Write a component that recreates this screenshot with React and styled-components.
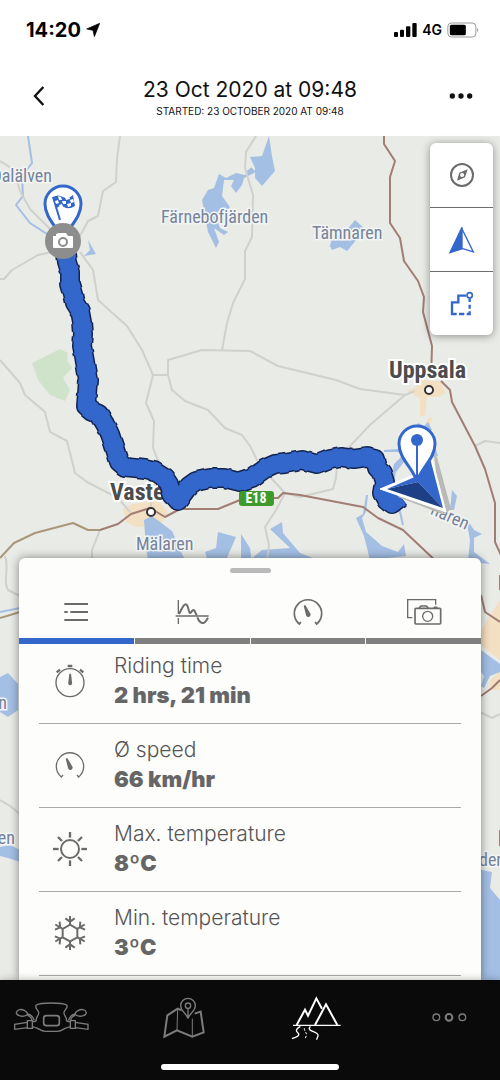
import React, {useState} from 'react';
import styled, {createGlobalStyle} from 'styled-components';

const GlobalStyle = createGlobalStyle`
    * {
        box-sizing: border-box;
    }
    body {
        margin: 0;
        font-family: Inter, "Liberation Sans", sans-serif;
        background: #fff;
    }
    button {
        border: 0;
        padding: 0;
        background: none;
        font: inherit;
        cursor: pointer;
    }
    svg {
        display: block;
    }
`;

const Page = styled.div`
    display: flex;
    flex-direction: column;
    height: 100vh;
    min-height: 640px;
    overflow: hidden;
`;

/* ---------- status bar + header ---------- */

const StatusBar = styled.div`
    display: flex;
    align-items: center;
    justify-content: space-between;
    height: 60px;
    flex-shrink: 0;
    padding: 0 20px 0 26px;
    color: #000;
`;

const StatusGroup = styled.div`
    display: flex;
    align-items: center;
    gap: 5px;
`;

const Clock = styled.span`
    font-size: 20px;
    font-weight: 700;
    line-height: 24px;
`;

const Network = styled.span`
    font-size: 14px;
    font-weight: 600;
    line-height: 20px;
`;

const Header = styled.header`
    display: flex;
    align-items: center;
    justify-content: space-between;
    height: 76px;
    flex-shrink: 0;
    padding: 0 19px 4px;
`;

const HeaderButton = styled.button`
    display: flex;
    align-items: center;
    justify-content: center;
    width: 40px;
    height: 40px;
`;

const Titles = styled.div`
    padding-top: 4px;
    text-align: center;
    color: #111;
`;

const Title = styled.h1`
    margin: 0;
    font-size: 21px;
    font-weight: 400;
    line-height: 26px;
`;

const Subtitle = styled.p`
    margin: 0;
    font-size: 10px;
    line-height: 16px;
    text-transform: uppercase;
`;

/* ---------- map ---------- */

const Stage = styled.main`
    display: grid;
    grid-template-columns: minmax(0, 1fr);
    grid-template-rows: minmax(0, 1fr) minmax(0, 1fr);
    flex: 1;
    min-height: 0;
    background: #e9ebe6;
`;

const MapCanvas = styled.svg`
    grid-row: 1 / 3;
    grid-column: 1;
    width: 100%;
    height: 100%;
    font-family: "Liberation Sans Narrow", "Roboto Condensed", "Open Sans", sans-serif;
`;

const MapTools = styled.div`
    grid-row: 1;
    grid-column: 1;
    justify-self: end;
    align-self: start;
    display: flex;
    flex-direction: column;
    width: 63px;
    margin: 7px;
    border-radius: 6px;
    background: #fff;
    box-shadow: 0 1px 8px rgba(0, 0, 0, 0.4);
`;

const ToolButton = styled.button`
    display: flex;
    align-items: center;
    justify-content: center;
    height: 64px;

    & + & {
        border-top: 1px solid #6d6d6d;
    }
`;

/* ---------- sheet ---------- */

const Sheet = styled.section`
    grid-row: 2;
    grid-column: 1;
    display: flex;
    flex-direction: column;
    min-height: 0;
    margin: 0 19px;
    border-radius: 6px 6px 0 0;
    background: #fdfdfc;
    box-shadow: 0 0 10px rgba(0, 0, 0, 0.45);
`;

const HandleArea = styled.div`
    height: 28px;
    flex-shrink: 0;
    padding-top: 10px;
`;

const Handle = styled.div`
    width: 41px;
    height: 5px;
    margin: 0 auto;
    border-radius: 3px;
    background: #bababa;
`;

const Tabs = styled.div`
    display: flex;
    gap: 1px;
    flex-shrink: 0;
`;

const Tab = styled.button`
    display: flex;
    align-items: center;
    justify-content: center;
    flex: 1;
    height: 58px;
    border-bottom: 6px solid ${({$active}) => ($active ? '#3367cb' : '#808080')};
`;

const List = styled.dl`
    flex: 1;
    min-height: 0;
    margin: 0;
    padding: 0 20px;
    overflow-y: auto;
    scrollbar-width: none;
`;

const Row = styled.div`
    display: flex;
    align-items: center;
    gap: 24px;
    padding: 12px 11px 13px;
    border-bottom: 1px solid #a9a9a9;

    &:first-child {
        padding-top: 8px;
    }
`;

const RowLabel = styled.dt`
    font-size: 21px;
    font-weight: 300;
    line-height: 28px;
    color: #555;
`;

const RowValue = styled.dd`
    margin: 0;
    font-size: 22px;
    font-weight: 900;
    line-height: 30px;
    color: #666;
`;

/* ---------- bottom navigation ---------- */

const BottomNav = styled.nav`
    position: relative;
    display: flex;
    flex-direction: column;
    align-items: center;
    justify-content: space-between;
    height: 100px;
    flex-shrink: 0;
    padding: 12px 13px 10px;
    background: #0a0a0a;
    box-shadow: 0 0 8px rgba(0, 0, 0, 0.3);
`;

const NavItems = styled.div`
    display: flex;
    justify-content: space-between;
    width: 100%;
`;

const NavButton = styled.button`
    display: flex;
    align-items: center;
    justify-content: center;
    width: 76px;
    height: 52px;
    color: ${({$active}) => ($active ? '#fff' : '#7c7c7c')};
`;

const HomeIndicator = styled.div`
    width: 178px;
    height: 6px;
    border-radius: 3px;
    background: #fff;
`;

/* ---------- icons ---------- */

const Icon = ({box, w = 40, h = 40, color = '#6b6b6b', stroke = 5, children}) => (
    <svg viewBox={box} width={w} height={h} fill="none" stroke={color} strokeWidth={stroke} aria-hidden="true">
        {children}
    </svg>
);

const LocationIcon = () => (
    <Icon box="0 0 40 40" w={14} h={14} color="none">
        <path d="M39 1 L24 39 L20 21 L2 17 Z" fill="#000" stroke="#000" strokeWidth="2" strokeLinejoin="round" />
    </Icon>
);

const SignalIcon = () => (
    <Icon box="0 0 69 42" w={23} h={14} color="none">
        <g fill="#000">
            <rect x="0" y="27" width="12" height="15" rx="3" />
            <rect x="18" y="20" width="12" height="22" rx="3" />
            <rect x="36" y="10" width="13" height="32" rx="3" />
            <rect x="55" y="0" width="13" height="42" rx="3" />
        </g>
    </Icon>
);

const BatteryIcon = () => (
    <Icon box="0 0 98 48" w={33} h={16} color="#9a9a9a" stroke={3}>
        <rect x="2" y="3" width="84" height="42" rx="11" />
        <rect x="8" y="8" width="48" height="32" rx="5" fill="#000" stroke="none" />
        <path d="M90 17 q7 7 0 14 Z" fill="#9a9a9a" stroke="none" />
    </Icon>
);

const BackIcon = () => (
    <Icon box="0 0 36 60" w={12} h={20} color="#111" stroke={7}>
        <path d="M31 3 L6 30 L31 57" />
    </Icon>
);

const DotsIcon = () => (
    <Icon box="0 0 72 18" w={24} h={6} color="none">
        <g fill="#111">
            <circle cx="10" cy="9" r="8" />
            <circle cx="36" cy="9" r="8" />
            <circle cx="62" cy="9" r="8" />
        </g>
    </Icon>
);

const CompassIcon = () => (
    <Icon box="575 55 120 120" stroke={6}>
        <circle cx="635" cy="115" r="33" />
        <path
            d="M652 98 L644 122 L620 132 L627 108 Z M635 109 a6 6 0 1 0 1 12 a6 6 0 1 0 -1 -12 Z"
            fill="#6b6b6b"
            fillRule="evenodd"
            stroke="none"
        />
    </Icon>
);

const NorthIcon = () => (
    <Icon box="575 248 120 120" color="#3367cb" stroke={4}>
        <path d="M635 275 L601 344 L635 333 L669 344 Z" />
        <path d="M635 270 L599 346 L635 334 Z" fill="#3367cb" />
    </Icon>
);

const AreaIcon = () => (
    <Icon box="573 440 120 120" color="#3367cb" stroke={7}>
        <path d="M645 475 H622 V495 H603 V530 H617" />
        <path d="M624 530 H640 M647 530 H656 V522 M656 514 V502 M656 494 V483" />
        <circle cx="656" cy="474" r="8" strokeWidth="5" />
    </Icon>
);

const ListIcon = () => (
    <Icon box="171 126 120 120" stroke={6}>
        <path d="M196 162 H267 M196 186 H206 M214 186 H267 M196 210 H267" />
    </Icon>
);

const ChartIcon = () => (
    <Icon box="517 126 120 120" stroke={4}>
        <path d="M528 198 H627 M536 150 V192 M536 204 V222" />
        <path
            d="M538 192 C547 176 551 163 558 163 C567 163 566 189 571 189 C576 189 577 178 582 180 C588 183 586 191 592 196 M593 202 C597 212 602 219 610 219 C617 219 621 210 625 203"
            strokeWidth="6"
        />
    </Icon>
);

const GaugeIcon = ({stroke}) => (
    <Icon box="864 126 120 120" stroke={stroke}>
        <path d="M903 216 L898 222 A41 41 0 1 1 950 222 L945 216" />
        <path d="M911 167 L916 165 L930 189 A7 7 0 1 1 918 195 Z" fill="#6b6b6b" stroke="none" />
    </Icon>
);

const PhotosIcon = () => (
    <Icon box="1211 126 120 120" stroke={4}>
        <path d="M1236 203 H1222 V149 H1306 V164" />
        <rect x="1244" y="175" width="77" height="47" rx="3" strokeWidth="5" />
        <path d="M1256 174 L1262 168 H1278 L1284 174 M1300 172 H1311" strokeWidth="5" />
        <circle cx="1282" cy="199" r="15" />
    </Icon>
);

const StopwatchIcon = () => (
    <Icon box="150 66 120 120" stroke={4}>
        <circle cx="210" cy="131" r="42" />
        <path d="M203 81 H217 M170 100 L180 92 M250 100 L240 92" strokeWidth="7" />
        <path d="M208 104 H213 L216 130 A6 6 0 1 1 205 130 Z" fill="#6b6b6b" stroke="none" />
    </Icon>
);

const SunIcon = () => (
    <Icon box="150 93 120 120" stroke={6}>
        <circle cx="210" cy="153" r="27" />
        {[0, 45, 90, 135, 180, 225, 270, 315].map(angle => (
            <path key={angle} d="M210 102 V119" strokeWidth="7" transform={`rotate(${angle} 210 153)`} />
        ))}
    </Icon>
);

const SnowIcon = () => (
    <Icon box="150 345 120 120" stroke={6}>
        <path d="M210 380 L232 393 V418 L210 430 L188 418 V393 Z" />
        {[0, 60, 120, 180, 240, 300].map(angle => (
            <path key={angle} d="M210 354 V380 M196 361 L210 371 L224 361" transform={`rotate(${angle} 210 405)`} />
        ))}
    </Icon>
);

const HandlebarHalf = () => (
    <>
        <path d="M49 113 C51 103 64 101 74 107 C80 110 84 115 82 118 C78 124 66 125 58 122 C53 120 49 117 49 113 Z" />
        <path d="M82 117 C94 119 97 124 103 136 M82 121 C90 123 94 127 96 136" />
        <path d="M82 142 L44 148 V163 L82 158 M82 137 V160 H97 V137 Z M97 140 H104 L109 137 M97 156 H103" />
    </>
);

const BikeIcon = () => (
    <Icon box="39 69 228 120" w={76} color="currentColor" stroke={4}>
        <path d="M109 138 C105 128 118 122 116 112 C114 104 102 97 109 90 C122 82 186 82 200 90 C206 97 194 104 192 112 C190 122 203 128 199 138" />
        <path d="M103 157 C115 157 120 169 136 169 H172 C188 169 193 157 205 157" />
        <rect x="131" y="122" width="47" height="30" rx="8" strokeWidth="5" />
        <HandlebarHalf />
        <g transform="translate(308 0) scale(-1 1)">
            <HandlebarHalf />
        </g>
    </Icon>
);

const MapIcon = () => (
    <Icon box="486 60 132 132" w={44} h={44} color="currentColor" stroke={6}>
        <path d="M545 103 L533 98 L502 118 L493 182 L531 163 L577 182 L611 169 L602 107 L584 113" />
        <path d="M533 98 L531 163 M577 128 V182" strokeWidth="3" />
        <path d="M564 128 C559 110 542 106 542 89 a22 22 0 0 1 44 0 C586 106 569 110 564 128 V98" strokeWidth="4" />
        <circle cx="564" cy="89" r="8" strokeWidth="4" />
    </Icon>
);

const MountainIcon = () => (
    <Icon box="126 54 150 150" w={50} h={50} color="currentColor" stroke={6}>
        <path d="M143 150 L168 104 L177 122 L202 70 L219 101" />
        <path d="M198 150 L231 88 L265 150" />
        <path d="M132 151 H275" strokeWidth="4" />
        <path d="M154 154 C138 164 140 168 149 176 C152 186 140 186 129 191" strokeWidth="4" />
        <path d="M166 160 C166 170 174 172 172 182 L168 192" strokeWidth="3" strokeDasharray="7 5" />
        <path d="M184 154 C170 170 206 168 207 180 C208 187 203 189 203 194" strokeWidth="4" />
    </Icon>
);

const MoreIcon = () => (
    <Icon box="540 67 114 120" w={38} color="currentColor" stroke={4}>
        <circle cx="559" cy="125" r="10" />
        <circle cx="597" cy="125" r="10" strokeWidth="6" />
        <circle cx="637" cy="125" r="10" />
    </Icon>
);

/* ---------- map drawing ---------- */

const minorRoads = [
    'M0 161 L13 169 L20 191 L30 209 L50 229',
    'M120 136 L117 159 L116 182 L103 191 L98 216 L88 221 L80 236',
    'M52 252 L38 255 L12 270 L4 279 L0 279',
    'M80 252 L93 270 L98 300 L127 326 L142 350 L153 375 L168 375',
    'M153 375 L146 403 L154 421 L153 448 L159 463 L150 510',
    'M256 136 L246 152 L245 168 L253 195 L252 237 L245 251 L245 279 L233 303 L227 323 L222 350',
    'M168 375 L168 360 L202 350 L250 351 L278 366 L336 380 L360 389 L405 395 L415 391',
    'M168 375 L172 390 L185 401 L208 410 L225 428 L242 435 L250 446 L257 460 L270 477 L285 493',
    'M405 395 L392 406 L370 425 L350 446 L335 458',
    'M337 463 L336 478 L333 489 L300 497 L285 493 L276 510 L265 527 L269 545 L266 570',
    'M475 446 L485 441 L500 443',
    'M0 360 L20 383 L25 395 L45 412 L50 432 L67 441 L75 473 L87 482 L118 498 L130 512',
    'M100 530 L92 550 L92 562',
    'M5 556 C10 570 2 580 8 590 L24 598',
    'M0 800 L10 806 L20 814',
    'M480 712 L492 718 L500 714',
];

const majorRoads = [
    'M384 136 L384 144 L395 161 L390 177 L390 223 L400 238 L404 261 L418 281 L424 297 L423 312 L432 346 L431 380',
    'M441 381 L450 390 L452 402 L475 446 L485 469 L495 503 L495 542 L501 555',
    'M273 498 L278 498 L283 493 L300 495 L363 507 L378 518 L403 530 L440 565',
    'M240 500 L218 509 L180 509 L165 517 L150 508 L131 514 L118 524 L100 530',
    'M481 595 L485 612 L500 622',
    'M481 696 L492 688 L500 680',
    'M500 575 V590 M500 830 V846',
];

const lakes = [
    'M219 174 L226 178 L236 173 L245 175 L252 168 L256 172 L244 178 L242 185 L236 193 L231 186 L234 180 L224 180 L222 196 L230 207 L224 214 L216 216 L220 228 L228 232 L224 235 L214 228 L219 242 L216 248 L208 232 L204 210 L202 200 L208 190 L214 188 Z',
    'M250 157 L262 156 L269 136 L272 156 L275 171 L262 186 L255 178 L255 168 Z',
    'M330 246 L332 238 L345 232 L355 220 L365 229 L357 239 L347 251 L340 247 L332 250 Z',
    'M144 520 L152 516 L172 531 L183 556 L196 572 L150 572 L146 548 Z',
    'M218 532 L236 537 L226 560 L208 562 L205 552 L216 548 Z M241 534 L250 548 L252 564 L241 562 Z',
    'M270 529 L282 522 L283 533 L300 553 L318 560 L250 560 L262 550 L290 548 Z',
    'M356 518 L363 514 L366 495 L368 495 L366 512 L362 518 L366 532 L382 546 L398 552 L404 544 L406 556 L370 560 L364 536 Z',
    'M384 450 L398 449 L410 454 L436 450 L438 456 L404 462 L396 472 L394 482 L391 478 L394 464 L402 456 L398 452 L384 452 Z',
    'M452 490 L457 496 L454 510 L450 510 Z M466 518 L474 530 L482 534 L474 538 L474 552 L490 564 L468 562 L470 540 Z',
    'M0 677 L8 673 L18 684 V710 L8 717 L0 712 Z',
    'M0 847 L10 845 L20 850 V862 L8 858 L0 856 Z',
    'M481 650 L500 664 V672 L490 676 L484 688 L481 686 L484 676 L481 672 Z',
    'M481 870 L492 872 L490 888 L500 900 V980 H478 V884 Z',
    'M418 423 L424 426 L428 422 L432 430 L414 432 Z',
    'M88 240 L92 247 L96 254 L84 256 L90 250 Z',
];

const route =
    'M66 254 L67 262 L70 272 L70 284 L73 294 L75 303 L80 311 L82 322 L83 334 L82 346 L84 356 L86 368 L88 380 L87 394 L86 406 L92 411 L99 414 L105 424 L110 434 L114 446 L119 462 L125 467 L145 469 L154 471 L165 478 L169 484 L172 494 L178 501 L189 486 L196 481 L210 478 L224 478 L240 482 L252 478 L266 468 L275 464 L285 463 L302 460 L317 464 L330 459 L341 457 L354 459 L367 457 L375 459 L377 468 L382 473 L385 482 L383 493 L387 500 L392 504 L401 497';

const PIN = 'M0 40 C-3 27 -18 17 -18 2 A18 18 0 0 1 18 2 C18 17 3 27 0 40 Z';

const Water = ({x, y, anchor, children, ...rest}) => (
    <text x={x} y={y} textAnchor={anchor} fontSize="18" fill="#75839b" stroke="#f3f5f4" strokeWidth="3" paintOrder="stroke" {...rest}>
        {children}
    </text>
);

const City = ({x, y, children}) => (
    <text x={x} y={y} fontSize="24" fontWeight="700" fill="#4c4c4e" stroke="#fff" strokeWidth="4" paintOrder="stroke">
        {children}
    </text>
);

const RouteMap = () => (
    <MapCanvas viewBox="0 136 500 844" preserveAspectRatio="xMidYMin slice" role="img" aria-label="Route map">
        <path d="M32 363 L60 349 L68 353 L67 360 L72 368 L63 378 L70 390 L65 401 L50 395 L38 380 Z" fill="#cfe3cb" />
        <g fill="#f3dfc2">
            <path d="M123 509 L132 504 L158 501 L168 512 L160 526 L136 527 L126 522 Z" />
            <path d="M407 391 L416 387 L422 380 L440 381 L446 393 L438 397 L427 397 L425 416 L420 416 L420 398 Z" />
            <path d="M428 418 L433 417 L430 425 L426 424 Z" />
            <path d="M481 630 L500 600 V660 L481 645 Z M490 680 L500 672 V690 H490 Z" />
        </g>
        <g fill="#a4bfe4">
            {lakes.map(d => <path key={d} d={d} />)}
        </g>
        <g fill="none" strokeLinejoin="round">
            <path d="M28 136 L32 163 L22 176 L23 196 L16 205 L30 223 L47 234" stroke="#a4bfe4" strokeWidth="2" />
            <path d="M252 168 L247 172 M428 440 L405 455 M395 490 L403 525 M0 612 L20 608" stroke="#a4bfe4" strokeWidth="2" />
            {minorRoads.map(d => <path key={d} d={d} stroke="#d0d1cc" strokeWidth="2" />)}
            {majorRoads.map(d => <path key={d} d={d} stroke="#a17d73" strokeWidth="2" />)}
            <path d="M100 530 L88 530 L73 523 L35 533 L14 543 L0 558 M0 618 L20 612" stroke="#a8977a" strokeWidth="2" />
        </g>

        <Water x="52" y="182" anchor="end">Dalälven</Water>
        <Water x="161" y="223">Färnebofjärden</Water>
        <Water x="312" y="239">Tämnaren</Water>
        <Water x="136" y="550">Mälaren</Water>
        <Water x="466" y="530" anchor="end" transform="rotate(24 466 530)">naren</Water>
        <Water x="7" y="709" anchor="end">n</Water>
        <Water x="15" y="844" anchor="end">en</Water>
        <Water x="479" y="866">der</Water>
        <City x="389" y="378">Uppsala</City>
        <City x="110" y="500">Vaste</City>
        <g fill="#fff" stroke="#333" strokeWidth="2">
            <circle cx="151" cy="512" r="4" />
            <circle cx="429" cy="390" r="4" />
        </g>

        <g fill="none" strokeLinejoin="round">
            <path d={route} stroke="#13234f" strokeWidth="20" />
            <path d={route} stroke="#13234f" strokeWidth="22" strokeDasharray="5 9 3 12 8 6" />
            <path d={route} stroke="#3367cb" strokeWidth="17" />
            <path d={route} stroke="#3367cb" strokeWidth="19" strokeDasharray="5 9 3 12 8 6" />
        </g>

        <rect x="239" y="491" width="35" height="15" rx="3" fill="#3f9a2c" />
        <text x="256" y="503" textAnchor="middle" fontSize="14" fontWeight="700" fill="#fff">E18</text>

        <path d="M434 455 L437 457 L451 509 L446 513 L442 514 L398 497 L400 494 L440 506 Z" fill="#b9bab5" />
        <path d="M380 489 L416 474 L431 455 L446 512 Z" fill="#fff" stroke="#fff" strokeWidth="1" strokeLinejoin="round" />
        <path d="M387 489 L417 476 L430 458 L443 508 L418 482 Z" fill="#3367cb" />
        <path d="M387 489 L418 482 L443 508 Z" fill="#1d3f86" />

        <g transform="translate(417 442)">
            <path d={PIN} fill="#fff" stroke="#3367cb" strokeWidth="3" />
            <circle cx="0" cy="-2" r="6" fill="#3367cb" />
            <path d="M0 0 V38" stroke="#3367cb" strokeWidth="2" />
        </g>
        <g transform="translate(63 202)">
            <path d={PIN} fill="#fff" stroke="#3367cb" strokeWidth="3" />
            <g transform="translate(-10 -7)">
                <path d="M0 2 Q5 -1 10 2 T20 0 L22 11 Q16 15 11 12 T3 14 Z" fill="#3367cb" />
                <path d="M0 2 L7 25" stroke="#3367cb" strokeWidth="2" />
                <path
                    d="M5 1 l3 1 l1 3 l-3 0 Z M12 2 l4 -1 l1 3 l-4 1 Z M2 6 l3 -1 l1 3 l-3 1 Z M9 6 l4 0 l0 3 l-3 0 Z M17 5 l3 -1 l1 3 l-3 1 Z M6 10 l3 -1 l1 3 l-3 0 Z M14 9 l4 -1 l0 3 l-3 1 Z"
                    fill="#fff"
                />
            </g>
        </g>
        <g transform="translate(63 241)">
            <circle r="18" fill="#8d8d8d" />
            <path d="M-10 -5 H-7 V-7 L-4 -8 H3 L5 -5 H9 Q10 -5 10 -4 V6 Q10 7 9 7 H-9 Q-10 7 -10 6 Z" fill="#fff" />
            <circle cy="1" r="4" fill="#fff" stroke="#8d8d8d" strokeWidth="2" />
        </g>
    </MapCanvas>
);

/* ---------- page ---------- */

const tabs = [
    {id: 'list', label: 'Summary', icon: <ListIcon />},
    {id: 'chart', label: 'Charts', icon: <ChartIcon />},
    {id: 'gauge', label: 'Speed', icon: <GaugeIcon stroke={5} />},
    {id: 'photos', label: 'Photos', icon: <PhotosIcon />},
];

const stats = [
    {label: 'Riding time', value: '2 hrs, 21 min', icon: <StopwatchIcon />},
    {label: 'Ø speed', value: '66 km/hr', icon: <GaugeIcon stroke={4} />},
    {label: 'Max. temperature', value: '8ºC', icon: <SunIcon />},
    {label: 'Min. temperature', value: '3ºC', icon: <SnowIcon />},
];

const navItems = [
    {id: 'bike', label: 'Motorcycle', icon: <BikeIcon />},
    {id: 'map', label: 'Navigation', icon: <MapIcon />},
    {id: 'rides', label: 'Rides', icon: <MountainIcon />},
    {id: 'more', label: 'More', icon: <MoreIcon />},
];

export default function App() {
    const [tab, setTab] = useState('list');
    const [section, setSection] = useState('rides');

    return (
        <Page>
            <GlobalStyle />
            <StatusBar>
                <StatusGroup>
                    <Clock>14:20</Clock>
                    <LocationIcon />
                </StatusGroup>
                <StatusGroup>
                    <SignalIcon />
                    <Network>4G</Network>
                    <BatteryIcon />
                </StatusGroup>
            </StatusBar>
            <Header>
                <HeaderButton aria-label="Back"><BackIcon /></HeaderButton>
                <Titles>
                    <Title>23 Oct 2020 at 09:48</Title>
                    <Subtitle>Started: 23 October 2020 at 09:48</Subtitle>
                </Titles>
                <HeaderButton aria-label="Options"><DotsIcon /></HeaderButton>
            </Header>

            <Stage>
                <RouteMap />
                <MapTools>
                    <ToolButton aria-label="Compass"><CompassIcon /></ToolButton>
                    <ToolButton aria-label="North up"><NorthIcon /></ToolButton>
                    <ToolButton aria-label="Show whole route"><AreaIcon /></ToolButton>
                </MapTools>
                <Sheet>
                    <HandleArea><Handle /></HandleArea>
                    <Tabs role="tablist">
                        {tabs.map(({id, label, icon}) => (
                            <Tab
                                key={id}
                                role="tab"
                                aria-label={label}
                                aria-selected={tab === id}
                                $active={tab === id}
                                onClick={() => setTab(id)}
                            >
                                {icon}
                            </Tab>
                        ))}
                    </Tabs>
                    <List>
                        {stats.map(({label, value, icon}) => (
                            <Row key={label}>
                                {icon}
                                <div>
                                    <RowLabel>{label}</RowLabel>
                                    <RowValue>{value}</RowValue>
                                </div>
                            </Row>
                        ))}
                    </List>
                </Sheet>
            </Stage>

            <BottomNav>
                <NavItems>
                    {navItems.map(({id, label, icon}) => (
                        <NavButton key={id} aria-label={label} $active={section === id} onClick={() => setSection(id)}>
                            {icon}
                        </NavButton>
                    ))}
                </NavItems>
                <HomeIndicator />
            </BottomNav>
        </Page>
    );
}
